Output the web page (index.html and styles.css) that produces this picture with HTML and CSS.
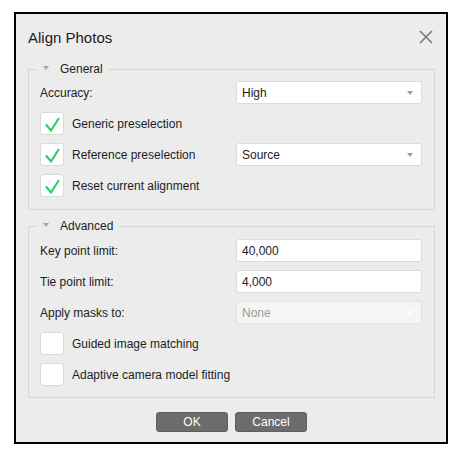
FILE: index.html
```
<!DOCTYPE html>
<html>
<head>
<meta charset="utf-8">
<link rel="stylesheet" href="styles.css">
</head>
<body>
<div class="dialog">
  <div class="titlebar">
    <span class="title">Align Photos</span>
    <svg class="close" width="14" height="14" viewBox="0 0 14 14"><path d="M1 1L13 13M13 1L1 13" stroke="#7a7a7a" stroke-width="1.6" fill="none"/></svg>
  </div>
  <fieldset class="group">
    <legend><span class="tri"></span>General</legend>
    <div class="rows">
      <div class="row">
        <span class="label">Accuracy:</span>
        <div class="combo"><span>High</span><span class="arrow"></span></div>
      </div>
      <div class="row">
        <label class="check"><span class="box"><svg width="24" height="23" viewBox="0 0 24 23"><path d="M6 12.5L11 18.5L19 6" stroke="#2ecf6b" stroke-width="2.2" fill="none"/></svg></span>Generic preselection</label>
      </div>
      <div class="row">
        <label class="check"><span class="box"><svg width="24" height="23" viewBox="0 0 24 23"><path d="M6 12.5L11 18.5L19 6" stroke="#2ecf6b" stroke-width="2.2" fill="none"/></svg></span>Reference preselection</label>
        <div class="combo"><span>Source</span><span class="arrow"></span></div>
      </div>
      <div class="row">
        <label class="check"><span class="box"><svg width="24" height="23" viewBox="0 0 24 23"><path d="M6 12.5L11 18.5L19 6" stroke="#2ecf6b" stroke-width="2.2" fill="none"/></svg></span>Reset current alignment</label>
      </div>
    </div>
  </fieldset>
  <fieldset class="group second">
    <legend><span class="tri"></span>Advanced</legend>
    <div class="rows">
      <div class="row">
        <span class="label">Key point limit:</span>
        <div class="combo"><span>40,000</span></div>
      </div>
      <div class="row">
        <span class="label">Tie point limit:</span>
        <div class="combo"><span>4,000</span></div>
      </div>
      <div class="row">
        <span class="label">Apply masks to:</span>
        <div class="combo disabled"><span>None</span><span class="arrow"></span></div>
      </div>
      <div class="row">
        <label class="check"><span class="box"></span>Guided image matching</label>
      </div>
      <div class="row">
        <label class="check"><span class="box"></span>Adaptive camera model fitting</label>
      </div>
    </div>
  </fieldset>
  <div class="buttons">
    <button class="btn">OK</button>
    <button class="btn">Cancel</button>
  </div>
</div>
</body>
</html>
```

FILE: styles.css
```
html, body {
  margin: 0;
  padding: 0;
  background: #ffffff;
}
body {
  font-family: "Liberation Sans", Arial, sans-serif;
  font-size: 12px;
  color: #1c1c24;
}
.dialog {
  box-sizing: border-box;
  width: 434px;
  height: 432px;
  margin: 12px 0 0 14px;
  border: 2px solid #000;
  background: #ececec;
  padding: 0 11px 0 12px;
}
.titlebar {
  height: 47px;
  display: flex;
  align-items: center;
  justify-content: space-between;
  padding-right: 2px;
}
.title {
  font-size: 15px;
  color: #1a1a22;
}
.close {
  display: block;
  margin-top: -1px;
}
.group {
  margin: 0;
  padding: 0 12px 12px 11px;
  border: 1px solid #d6d6d6;
  min-width: 0;
}
.group.second {
  margin-top: 8px;
  padding-bottom: 11px;
}
.group.second .rows {
  padding-top: 5px;
}
.group legend {
  margin-left: -3px;
  padding: 0 5px 0 6px;
  height: 16px;
  line-height: 16px;
  display: flex;
  align-items: center;
}
.tri {
  width: 0;
  height: 0;
  border-left: 3.5px solid transparent;
  border-right: 3.5px solid transparent;
  border-top: 4px solid #a8a8a8;
  margin-right: 11px;
  margin-top: -2px;
}
.rows {
  padding-top: 4px;
  display: flex;
  flex-direction: column;
  gap: 8px;
}
.row {
  height: 23px;
  display: grid;
  grid-template-columns: 196px 186px;
  align-items: center;
}
.check {
  display: flex;
  align-items: center;
}
.box {
  box-sizing: border-box;
  width: 24px;
  height: 23px;
  background: #fff;
  border: 1px solid #dadada;
  border-radius: 3px;
  margin-right: 8px;
  display: flex;
  align-items: center;
  justify-content: center;
}
.box svg {
  display: block;
  margin: -1px;
}
.combo {
  box-sizing: border-box;
  height: 23px;
  background: #fff;
  border: 1px solid #dcdcdc;
  border-radius: 3px;
  padding: 0 8px 0 5px;
  display: flex;
  align-items: center;
  justify-content: space-between;
}
.combo.disabled {
  background: #f5f5f5;
  color: #9a9a9a;
  border-color: #e2e2e2;
}
.arrow {
  width: 0;
  height: 0;
  border-left: 3.5px solid transparent;
  border-right: 3.5px solid transparent;
  border-top: 4px solid #9c9c9c;
}
.combo.disabled .arrow {
  border-top-color: #ffffff;
}
.buttons {
  margin-top: 14px;
  display: flex;
  justify-content: center;
  gap: 7px;
}
.btn {
  box-sizing: border-box;
  width: 72px;
  height: 20px;
  border: 1px solid #5e5e5e;
  border-radius: 3px;
  background: #6c6c6c;
  color: #ffffff;
  font-family: "Liberation Sans", Arial, sans-serif;
  font-size: 12px;
  padding: 0;
}
```
